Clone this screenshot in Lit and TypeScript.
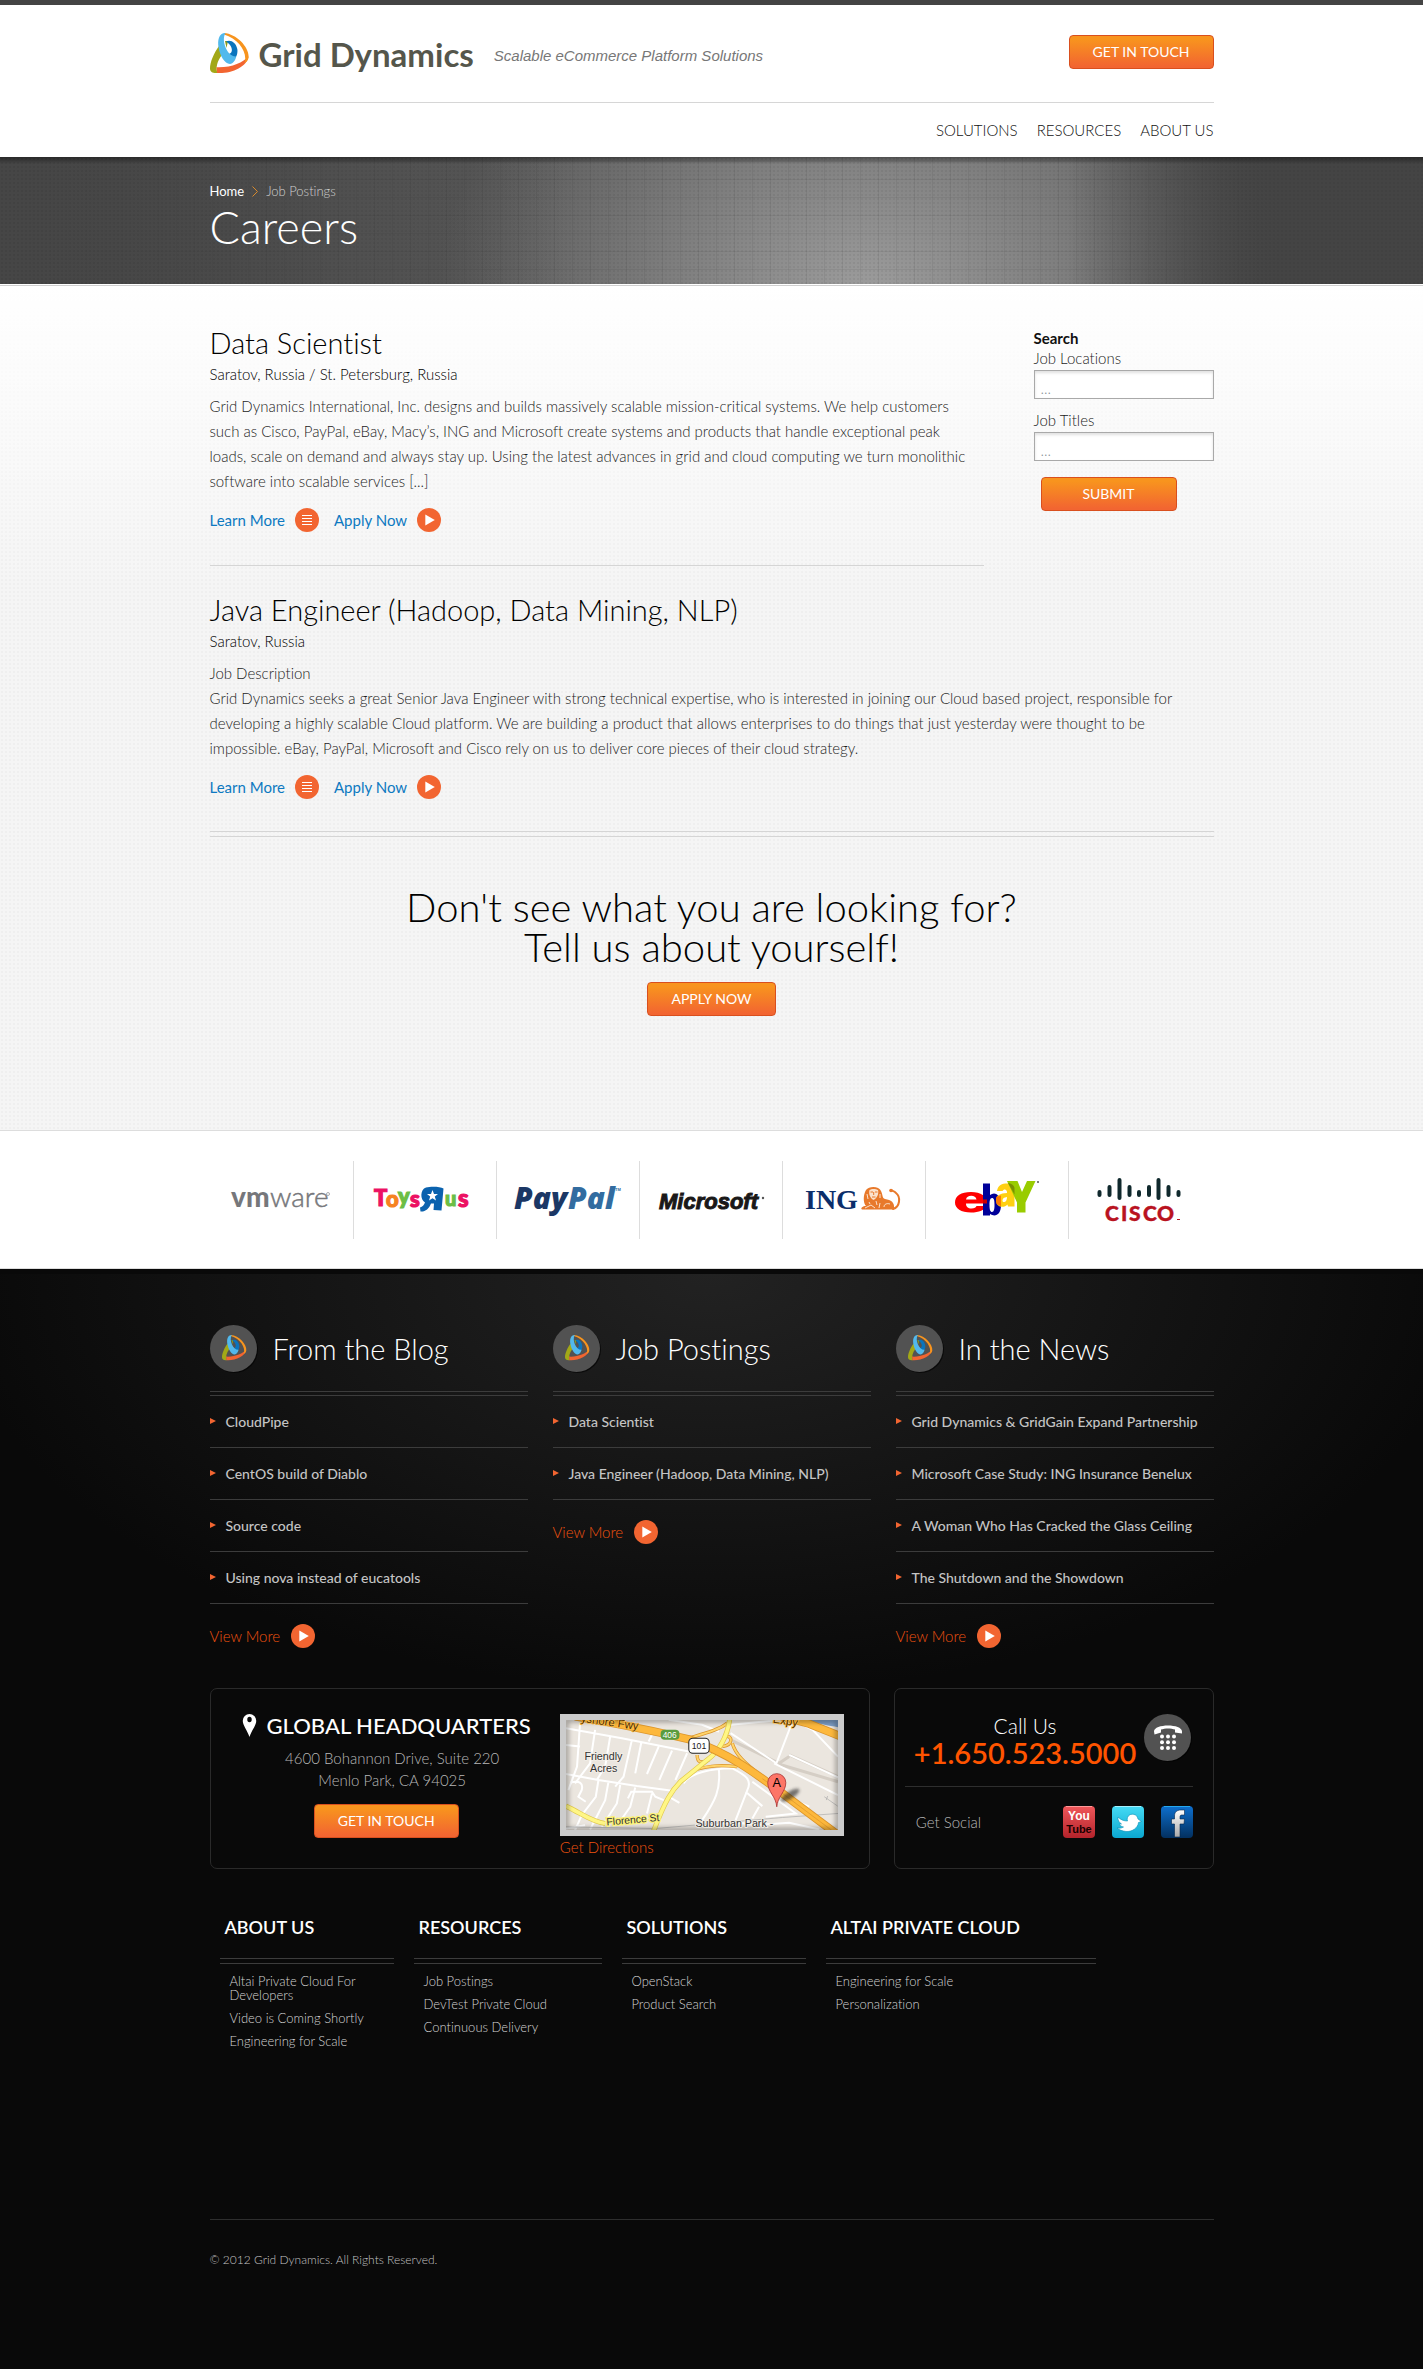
import { LitElement, html, css, svg } from "lit";
import { customElement, property } from "lit/decorators.js";

/* ---------- shared drawings ---------- */

const swoosh = svg`
  <path fill="#a2a817" d="M9 13C4 20 0 29 0 35.500C0 39 3 40.500 7.500 40C5.500 35 7 28 12 22Z"/>
  <path fill="#f26531" d="M7 40C21 41 37 34 38.500 23.500C33 29.500 21 35 6.500 34.300Z"/>
  <path fill="#f7941e" d="M14 0C27 1 40 15 38.500 25C38 27.500 36.500 29 34.500 30C38 20 29 6 14 1.600Z"/>
  <path fill="#8a9a1a" d="M15 8L18 8L16.500 15Z"/>
  <path fill="#0a74bd" d="M16 8.500C20 6 26 9 27.300 16C28 20 26.500 25 23.500 26.500L19 21C23.500 20 23 12.500 16 8.500Z"/>
  <path fill="#52b9ec" d="M15.500 0C8.500 0 7.500 8 8.500 14C10 23 14.500 30.500 20 31C23 31 25.500 27 26.300 23.500C18 24.500 10.500 8 15.500 0Z"/>`;

const logoMark = html`<svg class="mark" viewBox="0 0 39 41" width="39" height="41" aria-hidden="true">${swoosh}</svg>`;

const badge = html`<svg class="badge" viewBox="0 0 48 48" width="48" height="48" aria-hidden="true">
  <circle cx="24.500" cy="24.500" r="23.500" fill="#000" opacity=".6"/>
  <circle cx="23.500" cy="23.500" r="23.500" fill="#525252"/>
  <g transform="translate(12 10) scale(.63)">${swoosh}</g>
</svg>`;

const playIcon = html`<svg viewBox="0 0 24 24" width="24" height="24" aria-hidden="true">
  <circle cx="12" cy="12" r="12" fill="#f26531"/><path fill="#fff" d="M8.300 6.600L17.800 12L8.300 17.400Z"/></svg>`;

const listIcon = html`<svg viewBox="0 0 24 24" width="24" height="24" aria-hidden="true">
  <circle cx="12" cy="12" r="12" fill="#f26531"/>
  <path stroke="#fff" stroke-width="1" d="M7 7.500h10M7 10.500h10M7 13.500h10M7 16.500h10"/></svg>`;

const brandLogos = [
  { name: "VMware", art: html`<svg viewBox="0 0 143 78" width="143" height="78">
    <g font-family="Lato" fill="#76777b">
      <text x="21" y="46" font-size="28" font-weight="900">vm</text><text x="60" y="46" font-size="28" font-weight="300" stroke="#76777b" stroke-width=".5">ware</text></g>
    <circle cx="118" cy="33" r="1.500" fill="none" stroke="#76777b" stroke-width=".6"/></svg>` },
  { name: "Toys R Us", art: html`<svg viewBox="0 0 143 78" width="143" height="78">
    <g font-family="Lato" font-weight="900" stroke-width="1.200">
      <text x="21" y="45" font-size="22" fill="#ec1163" stroke="#ec1163">T</text>
      <text x="33" y="46" font-size="22" fill="#f6821f" stroke="#f6821f">o</text>
      <text x="45" y="43" font-size="22" fill="#6cbe45" stroke="#6cbe45">y</text>
      <text x="57" y="46" font-size="22" fill="#ec1163" stroke="#ec1163">s</text>
      <text x="92" y="45" font-size="20" fill="#6cbe45" stroke="#6cbe45">u</text>
      <text x="105" y="46" font-size="24" fill="#ec1163" stroke="#ec1163">s</text></g>
    <path fill="#0a62ae" d="M90.500 27.500L88.500 49.500L80.500 49L81 42.500L78 42.500C76 48 72 51 67.500 50.500L67 46.500C69.500 46 71 44 72 41.500C67 39 67 28.500 73 26.600C78 25 87 25.500 90.500 27.500Z"/>
    <path fill="#fff" d="M79.500 29L81 33L85 33L81.800 35.500L83 39.500L79.500 37.200L76 39.500L77.200 35.500L74 33L78 33Z"/></svg>` },
  { name: "PayPal", art: html`<svg viewBox="0 0 143 78" width="143" height="78">
    <g font-family="Open Sans" font-weight="800" font-style="italic" font-size="30">
      <text x="18" y="48" fill="#1b3765">Pay</text><text x="72" y="48" fill="#326ca0">Pal</text></g>
    <text x="119" y="30" font-family="Liberation Sans" font-weight="700" font-size="4" fill="#326ca0">TM</text></svg>` },
  { name: "Microsoft", art: html`<svg viewBox="0 0 143 78" width="143" height="78">
    <text x="20" y="48" font-family="Liberation Sans" font-weight="700" font-style="italic" font-size="22" fill="#1a1818" stroke="#1a1818" stroke-width="1">Microsoft</text>
    <circle cx="124" cy="37" r="1.200" fill="#555"/></svg>` },
  { name: "ING", art: html`<svg viewBox="0 0 143 78" width="143" height="78">
    <text x="23" y="48" font-family="Liberation Serif" font-weight="700" font-size="28" fill="#0b2e6b">ING</text>
    <g fill="none" stroke="#e8792b" stroke-linecap="round">
      <path stroke-width="2" d="M111 48C118 46 119 36 114 32C112 30 110 30 109 29"/></g>
    <g fill="#e8792b">
      <path d="M84 29C87 25 97 25 99 30C101 34 100 37 103 38C109 39 113 41 112 48.500L80 48.500C78 47 81 45 84 45C81 42 81 34 84 29Z"/>
      <circle cx="109" cy="29.500" r="1.800"/></g>
    <path fill="#fbe3cf" d="M87.500 29C89 27.500 94 27.500 96 29C97 33 95 37 91.500 39C88 37 86.500 33 87.500 29Z"/>
    <path fill="none" stroke="#e8792b" stroke-width="1" d="M88.500 31h2.500M93 31h2.500M91.700 31v3M90 36h3.500"/>
    <path fill="none" stroke="#fbe3cf" stroke-width="1" d="M83 47L89 44L93 47M97 47L98 42M102 46C102 43 105 42 108 43M87 41L88 43M94 40L95 44M85 33L86 38M98 33L98 37"/></svg>` },
  { name: "eBay", art: html`<svg viewBox="0 0 143 78" width="143" height="78">
    <path fill="#f00" fill-rule="evenodd" d="M46 31C56 31 62 35 62 42.500L41 42.500C41 46 43 47.500 46.500 47.500C49.500 47.500 51 46.500 51.500 45L61.500 45C60 49 54 51.500 46 51.500C36 51.500 30 47.500 30 41.500C30 35 36 31 46 31ZM41 38.500L51.500 38.500C51 36 49 34.800 46.200 34.800C43.500 34.800 41.500 36 41 38.500Z"/>
    <path fill="#009" fill-rule="evenodd" d="M58 22.500H65V34C70 30 76 34 76 44C76 54 70 56.500 65 53L65 54.500H58ZM67 37C65 37 64.500 40 64.500 44C64.500 49 65.500 51 67 51C69 51 69.500 48 69.500 44C69.500 39 69 37 67 37Z"/>
    <path fill="#c00" d="M58 38.500H62V42.500H58Z"/>
    <path fill="#fc0" fill-rule="evenodd" opacity=".93" d="M72 30C73 24 77 22.500 82 22.500C87 22.500 89.500 25 89.500 29V45.500H83L82.500 43.500C79 47.500 71 46.500 71 39.500C71 34 75 32.500 82 32C82.500 28.500 79 27 77.500 30ZM82 36C79 36.300 77.500 37.500 77.500 39.500C77.500 42 82 42 82 36Z"/>
    <path fill="#9c0" d="M82 20H92.500L97 31L102 20H110.500L100.500 41.500V51.500H92V41.500Z"/>
    <path fill="#7a8f00" d="M83 22L89.500 33.500V27C89 24 86 22.500 83 22Z"/>
    <path fill="#f60" opacity=".8" d="M71 36L76 34.500V45L71.500 43Z"/><circle cx="113" cy="21" r="1" fill="#555"/></svg>` },
  { name: "Cisco", art: html`<svg viewBox="0 0 143 78" width="143" height="78">
    <path stroke="#10292d" stroke-width="4" stroke-linecap="round" d="M31.500 31v3M41.500 26v8M51.500 19v18M61.500 26v8M71 31v3M81 26v8M90.500 19v18M100.500 26v8M110.500 31v3"/>
    <text x="37" y="59.500" font-family="Lato" font-weight="900" font-size="21" fill="#b9131f" stroke="#b9131f" stroke-width=".4"><tspan>C</tspan><tspan x="53">I</tspan><tspan x="61">S</tspan><tspan x="75">C</tspan><tspan x="89">O</tspan></text>
    <path fill="#b9131f" d="M109 58h3v1h-3z"/></svg>` },
];

const mapArt = html`<svg class="map" viewBox="33 60 813 330" preserveAspectRatio="xMidYMid slice" role="img" aria-label="Map of Menlo Park">
  <defs><filter id="soft" x="-30%" y="-30%" width="160%" height="160%"><feGaussianBlur stdDeviation="4"/></filter>
    <filter id="edge"><feGaussianBlur stdDeviation="8"/></filter></defs>
  <rect x="33" y="60" width="813" height="330" fill="#ebe6df"/>
  <path fill="#7b9cc4" d="M735 60H846V82C820 78 780 70 735 60Z"/>
  <g fill="none" stroke="#d5cec5" stroke-width="9">
    <path d="M525 120L670 190L700 170M660 190L846 245M700 165L846 230"/></g>
  <g fill="none" stroke="#fff" stroke-width="6">
    <path d="M33 85L200 115L400 155M33 135L75 140M75 70L66 200L40 270M120 90L105 190L60 250M165 110L150 200L125 240M230 120L205 230L180 260M258 128L240 220M310 140L275 222M350 152L312 240M295 95L280 125M395 160L360 240"/>
    <path d="M33 222L130 240L245 258L350 272M130 240L122 290L80 345L60 390M160 245L150 300L105 388M195 255L185 310L140 380M240 262L225 320L190 370M45 248C75 240 85 250 80 270L70 290L92 305M218 295L228 275H290L300 290L325 300M290 280L275 340M340 290L372 308M33 385L90 375"/>
    <path d="M525 75L655 62M525 100L662 190L710 65M655 190L846 285M700 165L846 232M710 60L770 90L846 170M340 60L440 75L490 95M385 250C400 220 470 205 530 205C570 225 590 240 575 270L540 360M490 210C495 270 480 300 440 360M590 245L720 340L630 350M570 275L620 318M610 320L590 355M440 380L530 365L600 375L700 368L790 388M720 310L760 320M690 290L760 320"/></g>
  <path fill="none" stroke="#aaa" stroke-width="2" d="M33 380L300 385L450 372L680 352L846 340M805 290L845 318M815 288l-4 12"/>
  <g fill="none" stroke-linejoin="round">
    <path stroke="#d9932a" stroke-width="10" d="M400 115C450 100 490 90 515 70M415 210C470 195 500 195 545 200M425 165C425 190 440 190 460 180M500 140C535 135 530 105 510 110M530 130C540 165 570 190 600 215"/>
    <path stroke="#ffd46b" stroke-width="6" d="M400 115C450 100 490 90 515 70M415 210C470 195 500 195 545 200M425 165C425 190 440 190 460 180M500 140C535 135 530 105 510 110M530 130C540 165 570 190 600 215"/>
    <path stroke="#e0c84a" stroke-width="15" d="M522 60C515 110 490 155 455 180L375 245C350 270 330 300 295 392M33 318C80 340 110 365 150 370"/>
    <path stroke="#fff685" stroke-width="11" d="M522 60C515 110 490 155 455 180L375 245C350 270 330 300 295 392M33 318C80 340 110 365 150 370"/>
    <path stroke="#dc952b" stroke-width="25" d="M60 50C150 65 260 85 400 118C520 160 600 220 680 280L840 400M660 45L760 72L860 112"/>
    <path stroke="#fdb83c" stroke-width="20" d="M60 50C150 65 260 85 400 118C520 160 600 220 680 280L840 400M660 45L760 72L860 112"/>
    <path stroke="#dc952b" stroke-width="2" d="M620 236C640 250 660 264 680 280L840 400"/></g>
  <rect x="33" y="60" width="813" height="330" fill="none" stroke="#000" stroke-width="14" opacity=".35" filter="url(#edge)"/>
  <rect x="316" y="90" width="56" height="30" rx="12" fill="#5a9c3f"/>
  <rect x="400" y="115" width="61" height="45" rx="12" fill="#fff" stroke="#222" stroke-width="3"/>
  <ellipse cx="703" cy="285" rx="32" ry="11" transform="rotate(-32 703 285)" fill="#222" opacity=".6" filter="url(#soft)"/>
  <path fill="#fd7567" stroke="#a33" stroke-width="2.500" d="M663 320C661 290 636 275 636 248A27 27 0 0 1 690 248C690 275 665 290 663 320Z"/>
  <g font-family="Liberation Sans" fill="#333" font-weight="400">
    <text x="322" y="114" font-size="25" fill="#fff">406</text>
    <text x="409" y="147" font-size="26" fill="#222">101</text>
    <text x="650" y="262" font-size="38" fill="#000">A</text>
    <g stroke="#f3efe9" stroke-width="5" paint-order="stroke" font-size="32">
      <text x="88" y="180">Friendly</text><text x="105" y="215">Acres</text><text x="420" y="381">Suburban Park -</text></g>
    <text x="155" y="376" font-size="31" stroke="#fbf27b" stroke-width="8" paint-order="stroke" transform="rotate(-5 155 376)">Florence St</text>
    <g stroke="#fdbf4c" stroke-width="4" paint-order="stroke" font-size="34" fill="#4a2a00">
      <text x="76" y="66" transform="rotate(8 76 66)">yshore Fwy</text><text x="650" y="68" transform="rotate(9 650 68)">Expy</text></g>
  </g>
</svg>`;

const pinIcon = html`<svg viewBox="0 0 17 29" width="17" height="29" aria-hidden="true">
  <path fill="#fff" fill-rule="evenodd" d="M8.500 0A8.500 8.500 0 0 1 17 8.500C17 14.500 11.500 20 8.500 29C5.500 20 0 14.500 0 8.500A8.500 8.500 0 0 1 8.500 0ZM8.500 3.500A2.800 3.500 0 0 0 8.500 10.500A2.800 3.500 0 0 0 8.500 3.500Z"/></svg>`;

const phoneIcon = html`<svg viewBox="0 0 48 48" width="48" height="48" aria-hidden="true">
  <circle cx="24.500" cy="24.500" r="23.500" fill="#000" opacity=".6"/>
  <circle cx="23.500" cy="23.500" r="23.500" fill="#525252"/>
  <path fill="#fff" d="M10 17.500C10 9.500 38 9.500 38 17.500V19.500L31 18.500V15.500C27 14 21 14 17 15.500V18.500L10.500 20.500Z"/>
  ${[22.5, 28.2, 34].map((y) => [18, 24, 30].map((x) => svg`<circle cx=${x} cy=${y} r="2" fill="#fff"/>`))}</svg>`;

const socials = [
  { name: "YouTube", art: html`<svg viewBox="0 0 32 32" width="32" height="32">
    <defs><linearGradient id="yt" x2="0" y2="1"><stop stop-color="#f0575a"/><stop offset="1" stop-color="#b4232b"/></linearGradient></defs>
    <rect width="32" height="32" rx="4" fill="url(#yt)"/><path stroke="#f99" stroke-width="1" d="M3 .5h26"/>
    <g font-family="Liberation Sans" font-weight="700" text-anchor="middle">
      <text x="16" y="14" fill="#fff" font-size="12">You</text><text x="16" y="27" fill="#1a0000" font-size="11">Tube</text></g></svg>` },
  { name: "Twitter", art: html`<svg viewBox="0 0 32 32" width="32" height="32">
    <defs><linearGradient id="tw" x2="0" y2="1"><stop stop-color="#46dbf5"/><stop offset="1" stop-color="#0ba7d0"/></linearGradient></defs>
    <rect width="32" height="32" rx="4" fill="url(#tw)"/><path stroke="#a5f0fc" stroke-width="1" d="M3 .5h26"/>
    <path fill="#fff" stroke="#0a8fb5" stroke-width=".6" d="M6 11C9 14 12 15 15.500 15C14 10 19 6.500 23.500 9C25 9.800 25.500 11.500 26 13L29.500 15.500L26.500 16.500C26 22 20 26 14 25.500C10.500 25 7 24 5 22C8 22.500 10 22 11.500 21C9 20.500 7.500 19 7.500 18H9.500C7 16.500 5.500 14 6 11Z"/></svg>` },
  { name: "Facebook", art: html`<svg viewBox="0 0 32 32" width="32" height="32">
    <defs><linearGradient id="fb" x2="0" y2="1"><stop stop-color="#0d6fce"/><stop offset="1" stop-color="#03305f"/></linearGradient>
    <linearGradient id="ff" x2="0" y2="1"><stop stop-color="#fff"/><stop offset="1" stop-color="#aaa"/></linearGradient></defs>
    <rect width="32" height="32" rx="4" fill="url(#fb)"/><path stroke="#25a8ee" stroke-width="1" d="M3 .5h26"/>
    <path fill="url(#ff)" stroke="#03254b" stroke-width=".6" d="M13.500 31V18H10.500V13H13.500V10C13.500 6 16 4 20 4H23.500V9H21C19.500 9 19 9.600 19 11V13H23.500L23 18H19V31Z"/></svg>` },
];

/* ---------- content ---------- */

const jobs = [
  {
    title: "Data Scientist",
    place: "Saratov, Russia / St. Petersburg, Russia",
    intro: "",
    text: "Grid Dynamics International, Inc. designs and builds massively scalable mission-critical systems. We help customers such as Cisco, PayPal, eBay, Macy’s, ING and Microsoft create systems and products that handle exceptional peak loads, scale on demand and always stay up. Using the latest advances in grid and cloud computing we turn monolithic software into scalable services [...]",
  },
  {
    title: "Java Engineer (Hadoop, Data Mining, NLP)",
    place: "Saratov, Russia",
    intro: "Job Description",
    text: "Grid Dynamics seeks a great Senior Java Engineer with strong technical expertise, who is interested in joining our Cloud based project, responsible for developing a highly scalable Cloud platform. We are building a product that allows enterprises to do things that just yesterday were thought to be impossible. eBay, PayPal, Microsoft and Cisco rely on us to deliver core pieces of their cloud strategy.",
  },
];

const feeds = [
  { title: "From the Blog", items: ["CloudPipe", "CentOS build of Diablo", "Source code", "Using nova instead of eucatools"] },
  { title: "Job Postings", items: ["Data Scientist", "Java Engineer (Hadoop, Data Mining, NLP)"] },
  { title: "In the News", items: ["Grid Dynamics & GridGain Expand Partnership", "Microsoft Case Study: ING Insurance Benelux", "A Woman Who Has Cracked the Glass Ceiling", "The Shutdown and the Showdown"] },
];

const siteMap = [
  { title: "ABOUT US", links: ["Altai Private Cloud For Developers", "Video is Coming Shortly", "Engineering for Scale"] },
  { title: "RESOURCES", links: ["Job Postings", "DevTest Private Cloud", "Continuous Delivery"] },
  { title: "SOLUTIONS", links: ["OpenStack", "Product Search"] },
  { title: "ALTAI PRIVATE CLOUD", links: ["Engineering for Scale", "Personalization"] },
];

/* ---------- styles shared by every element ---------- */

const base = css`
  :host { display: block; font-family: Lato, "Open Sans", sans-serif; font-weight: 300; font-size: 15px; font-variant-ligatures: none; }
  * { box-sizing: border-box; }
  h1, h2, h3, p, ul { margin: 0; padding: 0; font-weight: inherit; }
  ul { list-style: none; }
  a { color: inherit; text-decoration: none; }
  svg { display: block; }
  .wrap { max-width: 1004px; margin: 0 auto; }
  .btn {
    display: flex; align-items: center; justify-content: center; width: max-content;
    height: 34px; padding: 0 23px; border: 1px solid #d94f1e; border-radius: 4px;
    background: linear-gradient(#f8941e 10%, #f26531 95%);
    color: #fff; font: 400 14px/20px Lato, sans-serif; cursor: pointer;
  }
  .rule { height: 6px; border: solid #d5d5d5; border-width: 1px 0; }
  .more { display: flex; align-items: center; gap: 10px; width: max-content; line-height: 24px; }
`;

@customElement("site-header")
export class SiteHeader extends LitElement {
  static styles = [base, css`
    header { background: #fff; border-top: 5px solid #444; }
    .top { display: flex; align-items: center; height: 98px; border-bottom: 1px solid #d6d6d6; }
    .brand { display: flex; align-items: center; gap: 10px; color: #55564b; font-size: 33px; line-height: 40px; font-weight: 700; }
    .tag { margin-left: 20px; padding-top: 4px; font: italic 15px/20px "Liberation Sans", Arial, sans-serif; color: #777; }
    .btn { margin: 0 0 4px auto; }
    nav { display: flex; justify-content: flex-end; align-items: center; gap: 19px; height: 54px; font-size: 15px; color: #111; }
    .hero {
      padding: 24px 0 34px; color: #fff; border-bottom: 1px solid #fff;
      background:
        linear-gradient(rgba(0,0,0,.4), rgba(0,0,0,0) 7px),
        radial-gradient(circle, rgba(0,0,0,.05) 1px, transparent 1px) 0 0 / 4px 4px,
        linear-gradient(90deg, #464646, rgba(80,80,80,0) 40% 75%, #444 90%),
        repeating-linear-gradient(90deg, rgba(0,0,0,.06) 0 1px, transparent 1px 18px) 14px 0,
        repeating-linear-gradient(rgba(0,0,0,.06) 0 1px, transparent 1px 18px) 0 4px,
        radial-gradient(430px 340px at 61% 110%, #9d9d9d, rgba(140,140,140,.75) 45%, rgba(80,80,80,0)),
        linear-gradient(90deg, #454545, #565656 25%, #585858 75%, #444 90%);
    }
    .crumbs { display: flex; align-items: center; gap: 8px; font-size: 13px; line-height: 20px; color: #d0d0d0; }
    .crumbs a { color: #fff; font-weight: 400; }
    h1 { margin-top: 3px; font-size: 45px; line-height: 46px; }
    .edge { height: 1px; background: #cfcfcf; }
  `];
  render() {
    return html`
      <header>
        <div class="wrap top">
          <a class="brand" href="#">${logoMark}<span>Grid Dynamics</span></a>
          <span class="tag">Scalable eCommerce Platform Solutions</span>
          <a class="btn" href="#contact">GET IN TOUCH</a>
        </div>
        <nav class="wrap"><a href="#solutions">SOLUTIONS</a><a href="#resources">RESOURCES</a><a href="#about">ABOUT US</a></nav>
      </header>
      <div class="hero"><div class="wrap">
        <div class="crumbs"><a href="#">Home</a>
          <svg viewBox="0 0 6 11" width="6" height="11" aria-hidden="true"><path fill="none" stroke="#d98a2b" d="M.5.500L5.500 5.500L.5 10.500"/></svg>
          <span>Job Postings</span></div>
        <h1>Careers</h1>
      </div></div>
      <div class="edge"></div>`;
  }
}

@customElement("job-posting")
export class JobPosting extends LitElement {
  @property({ attribute: false }) job = jobs[0];
  static styles = [base, css`
    h2 { font-size: 29px; line-height: 38px; color: #000; }
    .place { margin-top: 2px; font-size: 15px; line-height: 20px; color: #000; }
    .text { margin-top: 10px; padding-right: 10px; line-height: 25px; color: #1c1c1c; }
    .links { display: flex; gap: 15px; margin-top: 14px; color: #0d79c1; font-weight: 400; }
  `];
  render() {
    const { title, place, intro, text } = this.job;
    return html`<article>
      <h2>${title}</h2>
      <p class="place">${place}</p>
      <div class="text">${intro ? html`<p>${intro}</p>` : ""}<p>${text}</p></div>
      <div class="links"><a class="more" href="#learn">Learn More ${listIcon}</a><a class="more" href="#apply">Apply Now ${playIcon}</a></div>
    </article>`;
  }
}

@customElement("job-search")
export class JobSearch extends LitElement {
  static styles = [base, css`
    form { display: flex; flex-direction: column; color: #1c1c1c; line-height: 20px; }
    h3 { font-size: 15px; font-weight: 700; color: #111; }
    input {
      width: 100%; height: 29px; margin: 2px 0 11px; padding: 6px 6px 0; border: 1px solid #a9a9a9; background: #fff;
      box-shadow: inset 0 2px 3px rgba(0,0,0,.12); font: 300 15px/20px Lato, sans-serif; color: #333;
    }
    input::placeholder { color: #8a9398; opacity: 1; }
    .btn { width: 136px; margin: 5px 0 0 7px; }
  `];
  render() {
    return html`<form @submit=${(e: Event) => e.preventDefault()}>
      <h3>Search</h3>
      <label for="loc">Job Locations</label><input id="loc" type="text" placeholder="...">
      <label for="title">Job Titles</label><input id="title" type="text" placeholder="...">
      <button class="btn" type="submit">SUBMIT</button>
    </form>`;
  }
}

@customElement("site-footer")
export class SiteFooter extends LitElement {
  static styles = [base, css`
    footer {
      border-top: 5px solid #090909; padding: 51px 0 99px; color: #ccc;
      background: radial-gradient(760px 420px at 50% 0, #222, rgba(10,10,10,0)) #090909;
    }
    .feeds { display: grid; grid-template-columns: repeat(3, 1fr); gap: 25px; }
    .head { display: flex; align-items: center; gap: 15px; height: 48px; color: #fff; }
    .head h2 { font-size: 29px; line-height: 38px; }
    .rule { border-color: #3c3c3c; }
    .feeds .rule { height: 5px; margin-top: 18px; }
    .feeds li { display: flex; align-items: center; gap: 10px; height: 52px; padding-bottom: 1px; border-bottom: 1px solid #3c3c3c; font-size: 14px; font-weight: 500; color: #c4c4c4; }
    .feeds .more { gap: 11px; margin-top: 20px; }
    .more, .dir { color: #ef520f; }
    .boxes { display: grid; grid-template-columns: 661fr 320fr; gap: 24px; margin-top: 40px; }
    .box { border: 1px solid #2a2a2a; border-radius: 7px; min-height: 181px; padding: 25px 25px 0 30px; }
    .hq { display: grid; grid-template-columns: 1fr 284px; gap: 28px; }
    .addr { display: flex; flex-direction: column; align-items: center; line-height: 22px; color: #b8b8b8; }
    .addr h2 { display: flex; align-items: center; gap: 8px; height: 23px; margin-bottom: 10px; color: #fff; font-size: 22px; font-weight: 500; white-space: nowrap; }
    .addr h2 svg { width: 17px; height: 23px; }
    .addr p { padding-left: 12px; text-align: center; }
    .addr .btn { margin-top: 13px; }
    .map { width: 284px; height: 122px; border: 6px solid #ccc; }
    .dir { display: block; line-height: 22px; }
    .call { padding: 25px 20px 0 10px; }
    .phone { display: flex; justify-content: space-between; padding: 0 1px 0 9px; text-align: center; height: 73px; border-bottom: 1px solid #2e2e2e; }
    .phone p { color: #fff; font-size: 21px; line-height: 24px; }
    .phone a { display: block; font-size: 29px; font-weight: 600; line-height: 30px; color: #ff5400; }
    .social { display: flex; align-items: center; gap: 17px; padding: 19px 0 0 11px; color: #b8b8b8; }
    .social span { margin-right: auto; }
    .map-cols { display: grid; grid-template-columns: 174fr 188fr 184fr 270fr; gap: 20px; padding: 46px 118px 0 10px; min-height: 350px; }
    .map-cols h3 { padding-left: 5px; color: #fff; font-size: 18px; line-height: 24px; font-weight: 600; }
    .map-cols .rule { margin: 19px 0 10px; }
    .map-cols ul { display: grid; gap: 9px; padding: 0 10px; font-size: 13px; line-height: 14px; color: #d4d4d4; }
    .copy { border-top: 1px solid #2e2e2e; padding-top: 30px; font-size: 12px; line-height: 20px; color: #c4c4c4; }
  `];
  render() {
    return html`<footer><div class="wrap">
      <div class="feeds">${feeds.map((f) => html`<section>
        <div class="head">${badge}<h2>${f.title}</h2></div>
        <div class="rule"></div>
        <ul>${f.items.map((t) => html`<li><svg viewBox="0 0 6 6" width="6" height="6" aria-hidden="true"><path fill="#f26531" d="M0 0L6 3L0 6Z"/></svg><a href="#item">${t}</a></li>`)}</ul>
        <a class="more" href="#more">View More ${playIcon}</a>
      </section>`)}</div>
      <div class="boxes">
        <section class="box hq">
          <div class="addr">
            <h2>${pinIcon}GLOBAL HEADQUARTERS</h2>
            <p>4600 Bohannon Drive, Suite 220<br>Menlo Park, CA 94025</p>
            <a class="btn" href="#contact">GET IN TOUCH</a>
          </div>
          <div>${mapArt}<a class="dir" href="#directions">Get Directions</a></div>
        </section>
        <section class="box call">
          <div class="phone"><div><p>Call Us</p><a href="tel:+16505235000">+1.650.523.5000</a></div>${phoneIcon}</div>
          <div class="social"><span>Get Social</span>${socials.map((s) => html`<a href="#social" aria-label=${s.name}>${s.art}</a>`)}</div>
        </section>
      </div>
      <nav class="map-cols">${siteMap.map((c) => html`<section>
        <h3>${c.title}</h3><div class="rule"></div>
        <ul>${c.links.map((l) => html`<li><a href="#page">${l}</a></li>`)}</ul>
      </section>`)}</nav>
      <p class="copy">© 2012 Grid Dynamics. All Rights Reserved.</p>
    </div></footer>`;
  }
}

@customElement("app-root")
export class AppRoot extends LitElement {
  static styles = [base, css`
    main {
      padding: 38px 0 114px;
      background:
        linear-gradient(#fff, rgba(255,255,255,0) 300px),
        radial-gradient(circle, rgba(0,0,0,.025) 1px, transparent 1px) 0 0 / 4px 4px,
        #f5f5f5;
    }
    .row { display: flex; justify-content: space-between; }
    .first { width: 774px; padding-bottom: 33px; border-bottom: 1px solid #d5d5d5; }
    .second { padding: 25px 0 32px; }
    job-search { width: 180px; padding-top: 4px; }
    .cta { margin-top: 50px; text-align: center; }
    .cta h2 { margin-bottom: 15px; font-size: 40px; line-height: 40px; color: #000; }
    .cta .btn { margin: 0 auto; }
    .brands { background: #fff; border: solid #ddd; border-width: 1px 0; padding: 30px 0 29px; }
    .brands ul { display: grid; grid-template-columns: repeat(7, minmax(0, 1fr)); padding-right: 3px; }
    .brands li { display: flex; justify-content: center; height: 78px; border-left: 1px solid #ddd; }
    .brands li:first-child { border-color: transparent; }
    .brands svg { flex: none; }
  `];
  render() {
    return html`
      <site-header></site-header>
      <main><div class="wrap">
        <div class="row"><job-posting class="first" .job=${jobs[0]}></job-posting><job-search></job-search></div>
        <job-posting class="second" .job=${jobs[1]}></job-posting>
        <div class="rule"></div>
        <section class="cta">
          <h2>Don't see what you are looking for?<br>Tell us about yourself!</h2>
          <a class="btn" href="#apply">APPLY NOW</a>
        </section>
      </div></main>
      <section class="brands"><ul class="wrap">${brandLogos.map((b) => html`<li aria-label=${b.name}>${b.art}</li>`)}</ul></section>
      <site-footer></site-footer>`;
  }
}
